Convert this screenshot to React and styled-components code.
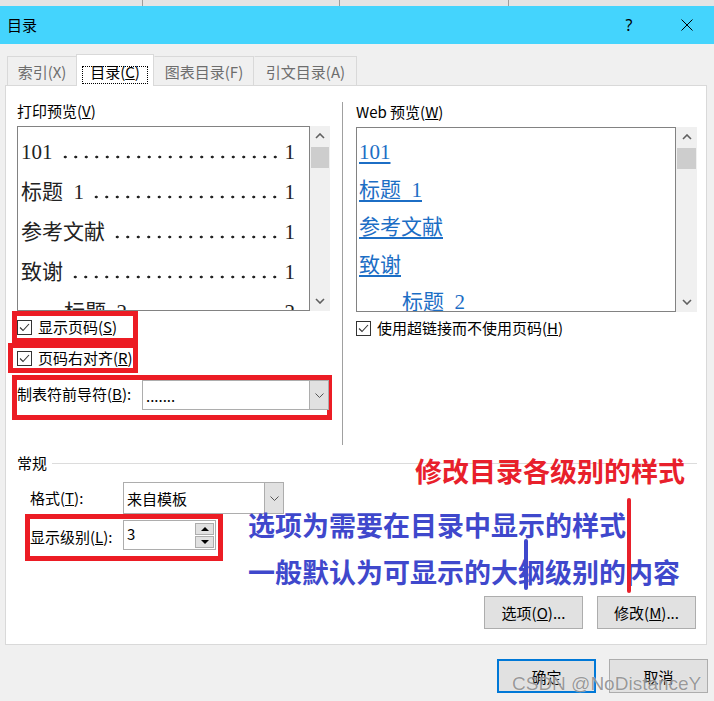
import React from 'react';
import styled, { createGlobalStyle } from 'styled-components';

const GlobalStyle = createGlobalStyle`
    html, body {
        margin: 0;
        padding: 0;
    }
    body {
        background: #f0f0f0;
        font-family: "Noto Sans CJK SC", "Noto Sans", sans-serif;
        font-size: 15px;
        color: #000;
    }
    * {
        box-sizing: border-box;
    }
`

const Window = styled.div`
    position: relative;
    width: 714px;
    height: 701px;
    overflow: hidden;
    background: #f0f0f0;
`

const TopStrip = styled.div`
    display: flex;
    height: 6px;
    background: #e4e4e4;
`

const StripCell = styled.div`
    width: ${p => p.$w}px;
    border-right: 1px solid #9c9c9c;
`

const TitleBar = styled.div`
    height: 38px;
    background: #44d4fd;
    display: flex;
    align-items: center;
    padding: 0 4px 0 7px;
`

const Title = styled.span`
    flex: 1;
    line-height: 20px;
`

const CaptionButton = styled.span`
    width: 46px;
    height: 30px;
    display: flex;
    align-items: center;
    justify-content: center;
    font-family: "Noto Sans", sans-serif;
    font-size: 16px;
    margin-right: ${p => p.$mr || 0}px;
`

const TabRow = styled.div`
    display: flex;
    align-items: flex-end;
    height: 41px;
    padding: 10px 0 0 7px;
`

const Tab = styled.div`
    position: relative;
    z-index: ${p => (p.$active ? 2 : 0)};
    width: ${p => p.$w}px;
    height: ${p => (p.$active ? 32 : 29)}px;
    margin-bottom: ${p => (p.$active ? -1 : 0)}px;
    margin-left: ${p => (p.$active ? -1 : 0)}px;
    background: ${p => (p.$active ? '#fff' : '#f0f0f0')};
    border: 1px solid #d9d9d9;
    border-bottom: none;
    border-left-color: ${p => (p.$noLeft ? 'transparent' : '#d9d9d9')};
    display: flex;
    justify-content: center;
    align-items: flex-start;
    padding-top: ${p => (p.$active ? 11 : 5)}px;
    color: ${p => (p.$active ? '#000' : '#6d6d6d')};
    line-height: 20px;
    white-space: nowrap;
`

const FocusText = styled.span`
    line-height: 12px;
    padding: 0 8px 6px;
    outline: 1px dotted #000;
    outline-offset: -1px;
`

const Panel = styled.div`
    margin-left: 5px;
    width: 702px;
    height: 560px;
    background: #fff;
    border: 1px solid #d9d9d9;
    padding: 15px 9px 15px 11px;
    display: flex;
    flex-direction: column;
`

const TopSection = styled.div`
    display: flex;
    gap: 10px;
`

const LeftColumn = styled.div`
    width: 315px;
    display: flex;
    flex-direction: column;
`

const RightColumn = styled.div`
    flex: 1;
    height: 343px;
    margin-top: 1px;
    border-left: 1px solid #a0a0a0;
    padding-left: 13px;
    display: flex;
    flex-direction: column;
`

const Label = styled.div`
    line-height: 20px;
    margin-bottom: 5px;
    white-space: nowrap;
`

const PreviewFrame = styled.div`
    display: flex;
    height: 185px;
`

const PreviewBox = styled.div`
    width: ${p => p.$w}px;
    border: 1px solid #828282;
    overflow: hidden;
    padding: ${p => p.$pad};
    font-family: "Liberation Serif", "Noto Sans CJK SC", serif;
    font-size: 21px;
    color: #222;
`

const Scrollbar = styled.div`
    width: ${p => p.$w}px;
    background: #f0f0f0;
    display: flex;
    flex-direction: column;
`

const ScrollArrow = styled.div`
    height: 20px;
    display: flex;
    align-items: center;
    justify-content: center;
`

const ScrollThumb = styled.div`
    height: 21px;
    margin: 1px 1px 0;
    background: #cdcdcd;
`

const ScrollTrack = styled.div`
    flex: 1;
`

const TocRow = styled.div`
    display: flex;
    height: 40px;
    line-height: 40px;
    padding-left: ${p => p.$indent || 0}px;
    white-space: pre;
`

const Leader = styled.span`
    flex: 1;
    margin: 0 4px 0 6px;
    background: radial-gradient(circle at 5.25px 25px, #222 1.2px, transparent 1.7px) right top / 10.5px 40px repeat-x;
`

const PageNum = styled.span`
    width: 11px;
    text-align: right;
`

const WebRow = styled.div`
    height: 37.5px;
    line-height: 37.5px;
    padding-left: ${p => p.$indent || 0}px;
    white-space: pre;
`

const WebLink = styled.span`
    color: #1c6ec5;
    text-decoration: underline;
    text-underline-offset: 3px;
`

const CheckRow = styled.div`
    display: flex;
    align-items: center;
    gap: 6px;
    margin-top: ${p => p.$mt || 0}px;
    line-height: 20px;
    white-space: nowrap;
`

const Box = styled.span`
    width: 15px;
    height: 15px;
    border: 1px solid #333;
    background: #fff;
    display: flex;
    align-items: center;
    justify-content: center;
    flex-shrink: 0;
`

const Highlight = styled.div`
    display: flex;
    align-items: ${p => p.$align || 'center'};
    border: 5px solid #ec1c24;
    width: ${p => p.$w}px;
    height: ${p => p.$h}px;
    margin-left: ${p => p.$ml}px;
    margin-top: ${p => p.$mt || 0}px;
    padding-left: ${p => p.$pl || 0}px;
`

const FieldLabel = styled.span`
    width: ${p => p.$w}px;
    line-height: ${p => p.$lh}px;
    white-space: nowrap;
    flex-shrink: 0;
`

const Select = styled.div`
    display: flex;
    width: ${p => p.$w}px;
    height: ${p => p.$h}px;
    border: 1px solid #adadad;
    background: #fff;
    flex-shrink: 0;
`

const SelectValue = styled.div`
    flex: 1;
    padding-left: 3px;
    display: flex;
    align-items: center;
    white-space: nowrap;
`

const DropButton = styled.div`
    width: 19px;
    background: #e1e1e1;
    border-left: 1px solid #adadad;
    display: flex;
    align-items: center;
    justify-content: center;
`

const Spin = styled.div`
    display: flex;
    width: 93px;
    height: 30px;
    margin-top: 1px;
    border: 1px solid #adadad;
    background: #fff;
    padding: 2px 1px 0 3px;
`

const SpinValue = styled.div`
    flex: 1;
    line-height: 22px;
`

const SpinButtons = styled.div`
    width: 19px;
    display: flex;
    flex-direction: column;
    gap: 1px;
`

const SpinButton = styled.div`
    height: 12px;
    background: #e1e1e1;
    border: 1px solid #adadad;
    display: flex;
    align-items: center;
    justify-content: center;
`

const GroupHeader = styled.div`
    display: flex;
    align-items: center;
    gap: 5px;
    margin-top: 8px;
    line-height: 20px;

    &::after {
        content: "";
        flex: 1;
        height: 1px;
        background: #dcdcdc;
    }
`

const GroupBody = styled.div`
    padding-left: 13px;
    display: flex;
    flex-direction: column;
`

const FormatRow = styled.div`
    display: flex;
    align-items: center;
    height: 32px;
    margin-top: 9px;
`

const ButtonRow = styled.div`
    margin-top: auto;
    display: flex;
    justify-content: flex-end;
    gap: ${p => p.$gap}px;
    padding-right: ${p => p.$pr || 0}px;
    padding-top: ${p => p.$pt || 0}px;
`

const Button = styled.div`
    width: 99px;
    height: ${p => p.$h}px;
    background: #e1e1e1;
    border: ${p => (p.$default ? '2px solid #0078d7' : '1px solid #adadad')};
    display: flex;
    align-items: center;
    justify-content: center;
    white-space: nowrap;
`

const Note = styled.div`
    position: absolute;
    left: ${p => p.$x}px;
    top: ${p => p.$y}px;
    font-size: 27px;
    font-weight: 700;
    line-height: 36px;
    color: ${p => p.$color};
    white-space: nowrap;
`

const Stroke = styled.div`
    position: absolute;
    left: ${p => p.$x}px;
    top: ${p => p.$y}px;
    width: 4px;
    height: ${p => p.$h}px;
    border-radius: 2px;
    background: ${p => p.$color};
`

const Watermark = styled.div`
    position: absolute;
    left: 512px;
    top: 673px;
    font-family: "Liberation Sans", Arial, sans-serif;
    font-size: 19px;
    line-height: 22px;
    color: rgba(110, 110, 110, 0.7);
    text-shadow: 0 0 1px rgba(255, 255, 255, 0.9);
    white-space: nowrap;
`

const Chevron = ({ up }) => (
    <svg width="10" height="6" viewBox="0 0 10 6">
        <polyline
            points={up ? '1,5 5,1 9,5' : '1,1 5,5 9,1'}
            fill="none"
            stroke="#606060"
            strokeWidth="1.6"
        />
    </svg>
)

const SmallChevron = () => (
    <svg width="9" height="5" viewBox="0 0 9 5">
        <polyline points="0.5,0.5 4.5,4.5 8.5,0.5" fill="none" stroke="#555" strokeWidth="1" />
    </svg>
)

const Triangle = ({ up }) => (
    <svg width="8" height="4" viewBox="0 0 8 4">
        <polygon points={up ? '0,4 4,0 8,4' : '0,0 8,0 4,4'} fill="#000" />
    </svg>
)

const Check = () => (
    <svg width="11" height="9" viewBox="0 0 11 9">
        <polyline points="1,4.5 4,7.5 10,1" fill="none" stroke="#333" strokeWidth="1.1" />
    </svg>
)

const ScrollBar = ({ w }) => (
    <Scrollbar $w={w}>
        <ScrollArrow><Chevron up /></ScrollArrow>
        <ScrollThumb />
        <ScrollTrack />
        <ScrollArrow><Chevron /></ScrollArrow>
    </Scrollbar>
)

const Checkbox = ({ children }) => (
    <>
        <Box><Check /></Box>
        <span>{children}</span>
    </>
)

const tocItems = [
    { text: '101', page: '1' },
    { text: '标题  1', page: '1' },
    { text: '参考文献', page: '1' },
    { text: '致谢', page: '1' },
    { text: '标题  2', page: '2', indent: 43 },
]

const App = () => {
    return (
        <Window>
            <GlobalStyle />
            <TopStrip>
                <StripCell $w={143} />
                <StripCell $w={197} />
                <StripCell $w={169} />
            </TopStrip>
            <TitleBar>
                <Title>目录</Title>
                <CaptionButton $mr={12}>?</CaptionButton>
                <CaptionButton>
                    <svg width="12" height="12" viewBox="0 0 12 12">
                        <path d="M0.5 0.5 L11.5 11.5 M11.5 0.5 L0.5 11.5" stroke="#000" strokeWidth="1" />
                    </svg>
                </CaptionButton>
            </TitleBar>

            <TabRow>
                <Tab $w={70}>索引(X)</Tab>
                <Tab $w={78} $active><FocusText>目录(<u>C</u>)</FocusText></Tab>
                <Tab $w={100} $noLeft>图表目录(F)</Tab>
                <Tab $w={103} $noLeft>引文目录(A)</Tab>
            </TabRow>

            <Panel>
                <TopSection>
                    <LeftColumn>
                        <Label>打印预览(<u>V</u>)</Label>
                        <PreviewFrame>
                            <PreviewBox $w={293} $pad="5px 14px 0 3px">
                                {tocItems.map(item => (
                                    <TocRow key={item.text} $indent={item.indent}>
                                        <span>{item.text}</span>
                                        <Leader />
                                        <PageNum>{item.page}</PageNum>
                                    </TocRow>
                                ))}
                            </PreviewBox>
                            <ScrollBar w={20} />
                        </PreviewFrame>
                        <Highlight $w={126} $h={32} $ml={-5}>
                            <CheckRow><Checkbox>显示页码(<u>S</u>)</Checkbox></CheckRow>
                        </Highlight>
                        <Highlight $w={130} $h={30} $ml={-9} $pl={4}>
                            <CheckRow><Checkbox>页码右对齐(<u>R</u>)</Checkbox></CheckRow>
                        </Highlight>
                        <Highlight $w={320} $h={45} $ml={-5} $mt={2} $align="flex-start">
                            <FieldLabel $w={125} $lh={28}>制表符前导符(<u>B</u>):</FieldLabel>
                            <Select $w={187} $h={30}>
                                <SelectValue>.......</SelectValue>
                                <DropButton><SmallChevron /></DropButton>
                            </Select>
                        </Highlight>
                    </LeftColumn>

                    <RightColumn>
                        <Label>Web 预览(<u>W</u>)</Label>
                        <PreviewFrame>
                            <PreviewBox $w={320} $pad="6px 0 0 2px">
                                {tocItems.map(item => (
                                    <WebRow key={item.text} $indent={item.indent}>
                                        <WebLink>{item.text}</WebLink>
                                    </WebRow>
                                ))}
                            </PreviewBox>
                            <ScrollBar w={21} />
                        </PreviewFrame>
                        <CheckRow $mt={6}>
                            <Checkbox>使用超链接而不使用页码(<u>H</u>)</Checkbox>
                        </CheckRow>
                    </RightColumn>
                </TopSection>

                <GroupHeader>常规</GroupHeader>
                <GroupBody>
                    <FormatRow>
                        <FieldLabel $w={93} $lh={20}>格式(<u>T</u>):</FieldLabel>
                        <Select $w={161} $h={32}>
                            <SelectValue>来自模板</SelectValue>
                            <DropButton><SmallChevron /></DropButton>
                        </Select>
                    </FormatRow>
                    <Highlight $w={198} $h={47} $ml={-5} $align="flex-start">
                        <FieldLabel $w={93} $lh={36}>显示级别(<u>L</u>):</FieldLabel>
                        <Spin>
                            <SpinValue>3</SpinValue>
                            <SpinButtons>
                                <SpinButton><Triangle up /></SpinButton>
                                <SpinButton><Triangle /></SpinButton>
                            </SpinButtons>
                        </Spin>
                    </Highlight>
                </GroupBody>

                <ButtonRow $gap={14} $pr={1}>
                    <Button $h={33}>选项(<u>O</u>)...</Button>
                    <Button $h={33}>修改(<u>M</u>)...</Button>
                </ButtonRow>
            </Panel>

            <ButtonRow $gap={13} $pr={6} $pt={14}>
                <Button $h={34} $default>确定</Button>
                <Button $h={34}>取消</Button>
            </ButtonRow>

            <Note $x={415} $y={453} $color="#e8202b">修改目录各级别的样式</Note>
            <Note $x={248} $y={507} $color="#3f48cc">选项为需要在目录中显示的样式</Note>
            <Note $x={248} $y={554} $color="#3f48cc">一般默认为可显示的大纲级别的内容</Note>
            <Stroke $x={627} $y={498} $h={95} $color="#e8202b" />
            <Stroke $x={524} $y={539} $h={51} $color="#3f48cc" />

            <Watermark>CSDN @NoDistanceY</Watermark>
        </Window>
    )
}

export default App;
